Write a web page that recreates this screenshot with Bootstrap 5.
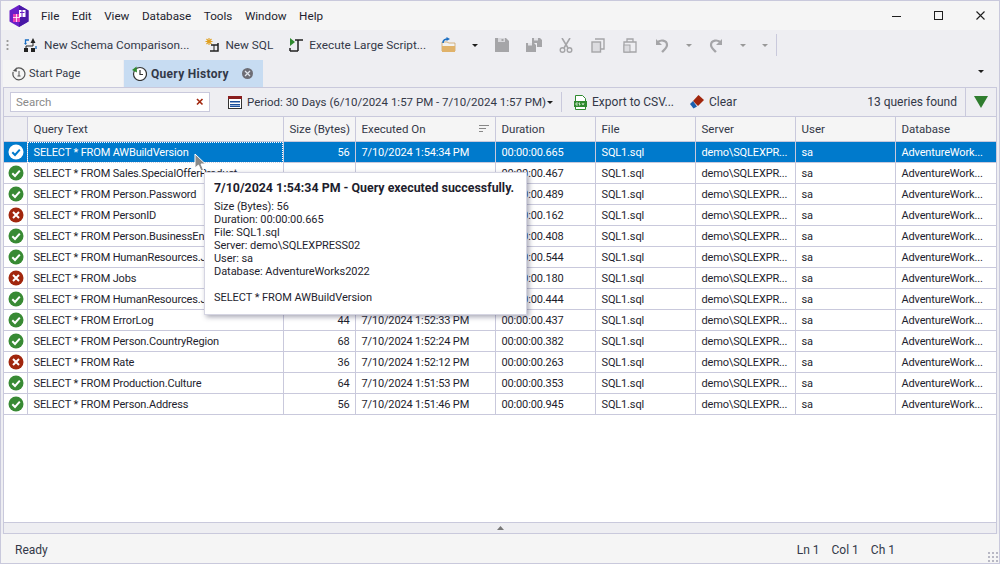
<!DOCTYPE html>
<html lang="en">
<head>
<meta charset="utf-8">
<title>Query History</title>
<link href="https://cdn.jsdelivr.net/npm/bootstrap@5.3.0/dist/css/bootstrap.min.css" rel="stylesheet">
<style>
html,body{height:564px;overflow:hidden}
body{font-family:Roboto,"Liberation Sans",sans-serif;font-size:12px;line-height:16px;color:#1e1e2e;background:#eeeef2;border:1px solid #c9c9dc;position:relative}
.app-title{height:29px;background:#f5f5f5;flex:none}
.app-logo{margin:0 12px 0 8px}
.menu-item{margin-right:12.5px;color:#1e1e2e;font-size:11.7px}
.win-btn{width:42px;display:flex;justify-content:center}
.win-set{margin-right:-3px}
.tool-row{height:30px;flex:none;background:#eeeef2;font-size:11.8px}
.grip{width:3px;height:13px;margin:0 14px 0 5px;background-image:radial-gradient(circle,#999 1px,transparent 1.2px);background-size:3px 4px}
.tool-txt{margin-left:5px;color:#333848}
.tool-ico{width:32px;display:flex;justify-content:center;flex:none}
.folder-slot{margin-left:7px}
.caret-open{margin:0 8px 0 7px}
.caret-undo{margin-left:8px}
.caret-mini{width:0;height:0;border-left:3.5px solid transparent;border-right:3.5px solid transparent;border-top:3.5px solid #1e1e1e;flex:none}
.caret-mute{border-top-color:#999}
.caret-tabs{margin:0 15px 14px auto}
.caret-period{margin-left:1px}
.vsep{width:1px;background:#c9c9dc;align-self:stretch;flex:none}
.tab-row{height:27px;flex:none;padding-left:2px}
.doc-tab{height:27px;display:flex;align-items:center;flex:none}
.tab-start{width:120px;background:#f5f5f5;padding-left:9px;margin-right:1px;font-size:11px;color:#333848}
.tab-start svg{margin-right:3px}
.tab-query{width:139px;background:#c7dcf2;padding-left:8px;font-weight:700;color:#333848;letter-spacing:.3px}
.tab-close{width:11px;height:11px;border-radius:50%;background:#6d6d75;margin-left:13px;display:flex;align-items:center;justify-content:center}
.work-panel{border:1px solid #c9c9dc;margin:0 2px;flex:1 1 0;min-height:0;position:relative}
.filter-row{height:29px;flex:none;border-bottom:1px solid #c9c9dc;padding-left:6px}
.search-box{width:200px;height:20px;background:#fff;border:1px solid #c9c9dc;padding:0 5px;color:#8a8a8a;font-size:11.5px}
.cal-ico{margin-left:18px}
.period-txt{font-size:11.5px}
.csv-ico{margin-left:12px}
.grid-area{flex:1 1 0;min-height:0;background:#fff;overflow:hidden;border-bottom:1px solid #c9c9dc}
.qgrid{table-layout:fixed;border-collapse:collapse;width:992px;color:#1e1e2e;font-size:11px;letter-spacing:-.15px}
.qgrid th,.qgrid td{height:21px;padding:1px 5px 0 6px;border-right:1px solid #c9c9dc;border-bottom:1px solid #c9c9dc;white-space:nowrap;overflow:hidden;font-weight:400;vertical-align:middle;line-height:16px}
.qgrid th{height:24.5px;padding-top:0;background:#f5f5f5;color:#333848;position:relative;font-size:11.5px;letter-spacing:0}
.qgrid th:first-child{background:#eeeef2}
.qgrid td:first-child{padding:0 0 0 1px;text-align:center;background:#fff}
.qgrid td.num{text-align:right;padding-right:5px}
.qgrid td svg{display:block;margin:0 auto}
.row-on td{background:#007acc!important;color:#fff}
.row-on td.cell-focus{outline:1px dotted #fff;outline-offset:-1px}
.sort-ico{position:absolute;right:6px;top:8px}
.strip-low{height:10px;flex:none;display:flex;align-items:center;justify-content:center}
.status-row{height:29px;flex:none;background:#f5f5f5;padding:3px 14px 0;color:#333848;position:relative}
.status-gap{margin-left:12px}
.status-end{margin-right:90px}
.corner-grip{position:absolute;right:1px;bottom:1px;width:11px;height:11px;background-image:radial-gradient(circle,#b8b8c4 1px,transparent 1.1px);background-size:4px 4px}
.hover-tip{position:absolute;left:203px;top:171px;width:323px;height:143px;background:#fff;border:1px solid #d5d5e2;box-shadow:2px 2px 5px rgba(60,60,90,.45);padding:7px 9px;color:#1e1e2e;line-height:13px;z-index:5;font-size:11px;letter-spacing:-.05px}
.hover-tip b{display:block;margin-bottom:4px;line-height:16px;white-space:nowrap;font-size:12.4px;letter-spacing:0}
.hover-cursor{position:absolute;left:193px;top:152px;z-index:6}
</style>
</head>
<body class="d-flex flex-column">
<svg width="0" height="0" class="position-absolute">
<symbol id="ok" viewBox="0 0 16 16"><circle cx="8" cy="8" r="7.5" fill="#388a34"/><path d="M4.300 8.300 7 11l4.800-5.400" fill="none" stroke="#fff" stroke-width="2"/></symbol>
<symbol id="okw" viewBox="0 0 16 16"><circle cx="8" cy="8" r="7.5" fill="#fff"/><path d="M4.300 8.300 7 11l4.800-5.400" fill="none" stroke="#007acc" stroke-width="2"/></symbol>
<symbol id="bad" viewBox="0 0 16 16"><circle cx="8" cy="8" r="7.5" fill="#a1260d"/><path d="m5 5 6 6m0-6-6 6" fill="none" stroke="#fff" stroke-width="2"/></symbol>
</svg>

<div class="app-title d-flex align-items-center">
  <svg class="app-logo" width="20" height="22" viewBox="0 0 20 22"><path d="M10 0 19.500 5.500V16.500L10 22 .5 16.500V5.500Z" fill="#6a1fc8"/><path d="M10 0 19.500 5.500V16.500L10 22Z" fill="#4a1aa6"/><rect x="4" y="9" width="7" height="8" fill="#e83fb8"/><rect x="10" y="5" width="6.500" height="7" fill="#fff"/><path d="M11 7.500h4.500M13 5v7" stroke="#6a1fc8"/><path d="M4 12.500h7M7.500 9v8" stroke="#fff" stroke-width=".8"/></svg>
  <span class="menu-item">File</span><span class="menu-item">Edit</span><span class="menu-item">View</span><span class="menu-item">Database</span><span class="menu-item">Tools</span><span class="menu-item">Window</span><span class="menu-item">Help</span>
  <div class="ms-auto d-flex win-set">
    <span class="win-btn"><svg width="10" height="10"><path d="M0 5.500h9" stroke="#1e1e1e"/></svg></span>
    <span class="win-btn"><svg width="10" height="10"><rect x=".5" y=".5" width="8" height="8" fill="none" stroke="#1e1e1e" stroke-width="1"/></svg></span>
    <span class="win-btn"><svg width="10" height="10"><path d="m.5.500 8 8m0-8-8 8" stroke="#1e1e1e" stroke-width="1.100" fill="none"/></svg></span>
  </div>
</div>

<div class="tool-row d-flex align-items-center">
  <span class="grip"></span>
  <svg width="16" height="16" viewBox="0 0 16 16"><path d="M10 1 7.500 6h5zM1 11h4v4H1zM8 11h4v4H8z" fill="#222"/><path d="M6 3H2.500v3M13 9v3" fill="none" stroke="#1b6ec2" stroke-width="1.300"/><path d="M1 6l1.500 2L4 6z" fill="#1b6ec2"/><path d="M10 6v3H3v2" fill="none" stroke="#222"/></svg>
  <span class="tool-txt">New Schema Comparison...</span>
  <svg class="ms-3" width="15" height="16" viewBox="0 0 15 16"><path d="M4 1v7M.5 4.500h7M1.500 2l5 5m0-5-5 5" stroke="#e0a020" stroke-width="1.100"/><path d="M6 8h7M13 6v8H6.500M5 14h3" fill="none" stroke="#222" stroke-width="1.500"/><path d="M9 8v6" stroke="#222"/></svg>
  <span class="tool-txt">New SQL</span>
  <svg class="ms-3" width="15" height="16" viewBox="0 0 15 16"><path d="M1 1v8l5-4z" fill="#2f8a2f"/><path d="M6 3h8M9 3v11M1 14h8M1 11v3" fill="none" stroke="#222" stroke-width="1.500"/></svg>
  <span class="tool-txt">Execute Large Script...</span>
  <span class="tool-ico folder-slot"><svg width="16" height="16" viewBox="0 0 16 16"><path d="M1 5h5l2 1h6v8H1z" fill="#f2f2f2" stroke="#c59a55" stroke-width=".7"/><path d="M1 15V9h13v6z" fill="#e0b26a"/><path d="M2 6c0-3 2-4 5-4" fill="none" stroke="#1b6ec2" stroke-width="1.600"/><path d="M5.500 0 9 2 5.500 4z" fill="#1b6ec2"/></svg></span>
  <span class="caret-mini caret-open"></span>
  <span class="tool-ico"><svg width="14" height="14" viewBox="0 0 14 14"><path d="M0 0h11l3 3v11H0z" fill="#a5a5a8"/><rect x="3" y="0" width="7" height="4" fill="#d8d8dc"/><rect x="6.500" y="1" width="2" height="2" fill="#a5a5a8"/></svg></span>
  <span class="tool-ico"><svg width="16" height="14" viewBox="0 0 16 14"><path d="M0 5h8l2 2v7H0z" fill="#a5a5a8"/><path d="M6 0h8l2 2v7h-5V5H6z" fill="#a5a5a8"/><rect x="2" y="5" width="4" height="2.500" fill="#e4e4e8"/><rect x="8" y="0" width="4" height="2.500" fill="#e4e4e8"/></svg></span>
  <span class="tool-ico"><svg width="14" height="15" viewBox="0 0 14 15"><path d="m3 0 6 10m2-10L5 10" stroke="#a5a5a8" stroke-width="1.600"/><circle cx="3.500" cy="12" r="2.300" fill="none" stroke="#a5a5a8" stroke-width="1.400"/><circle cx="10.500" cy="12" r="2.300" fill="none" stroke="#a5a5a8" stroke-width="1.400"/></svg></span>
  <span class="tool-ico"><svg width="14" height="15" viewBox="0 0 14 15"><path d="M4 1h9v10h-3" fill="none" stroke="#a5a5a8" stroke-width="1.400"/><rect x="1" y="4" width="8.500" height="10" fill="#dcdce0" stroke="#a5a5a8" stroke-width="1.400"/></svg></span>
  <span class="tool-ico"><svg width="14" height="15" viewBox="0 0 14 15"><path d="M1 4h12v10H1z" fill="none" stroke="#a5a5a8" stroke-width="1.300"/><path d="M4 4V1h6v3" fill="none" stroke="#a5a5a8" stroke-width="1.300"/><rect x="1" y="7" width="6" height="7" fill="#dcdce0" stroke="#a5a5a8"/></svg></span>
  <span class="tool-ico"><svg width="14" height="15" viewBox="0 0 14 15"><path d="M1 1v6h6" fill="#a5a5a8"/><path d="M2 5c3-4 10-3 10 2 0 3-3 5-5 7" fill="none" stroke="#a5a5a8" stroke-width="2.200"/></svg></span>
  <span class="caret-mini caret-mute caret-undo"></span>
  <span class="tool-ico ms-2"><svg width="14" height="15" viewBox="0 0 14 15"><path d="M13 1v6H7" fill="#a5a5a8"/><path d="M12 5C9 1 2 2 2 7c0 3 3 5 5 7" fill="none" stroke="#a5a5a8" stroke-width="2.200"/></svg></span>
  <span class="caret-mini caret-mute caret-undo"></span>
  <span class="caret-mini caret-mute ms-3"></span>
  <span class="vsep ms-2 my-1"></span>
</div>

<div class="tab-row d-flex align-items-end">
  <div class="doc-tab tab-start">
    <svg width="14" height="14" viewBox="0 0 14 14"><path d="M4 1.600A6 6 0 1 1 1.200 5" fill="none" stroke="#555" stroke-width="1.200"/><path d="M7 4v5M5.500 9H8.500" stroke="#555"/><path d="M4.500 .5 .8 4l4 .8z" fill="#555"/></svg>
    <span>Start Page</span>
  </div>
  <div class="doc-tab tab-query">
    <svg width="15" height="15" viewBox="0 0 15 15" class="me-1"><circle cx="8" cy="8" r="6.500" fill="#fff" stroke="#333" stroke-width="1.200"/><path d="M8 4v4.500h3" fill="none" stroke="#333" stroke-width="1.200"/><path d="M4.500 .5 0 4l5 2.500z" fill="#2f8a2f"/></svg>
    <span>Query History</span>
    <span class="tab-close"><svg width="7" height="7"><path d="m1 1 5 5m0-5-5 5" stroke="#dfe3ea" stroke-width="1.300"/></svg></span>
  </div>
  <span class="caret-mini caret-tabs"></span>
</div>

<div class="work-panel d-flex flex-column">
  <div class="filter-row d-flex align-items-center">
    <div class="search-box d-flex align-items-center justify-content-between"><span>Search</span><svg width="8" height="8"><path d="m1 1 5.500 5.500m0-5.500-5.500 5.500" stroke="#a1260d" stroke-width="1.600"/></svg></div>
    <svg class="cal-ico" width="14" height="14" viewBox="0 0 14 14"><rect x=".5" y="1.500" width="13" height="12" fill="#fff" stroke="#333"/><rect x="0" y="1" width="14" height="3" fill="#8a1f1f"/><path d="M2 6h10v1.600H2zM2 9h10v1.600H2z" fill="#1b4f9c"/><path d="M2 11.500h10" stroke="#1b4f9c" stroke-width="1"/></svg>
    <span class="tool-txt period-txt">Period: 30 Days (6/10/2024 1:57 PM - 7/10/2024 1:57 PM)</span>
    <span class="caret-mini caret-period"></span>
    <span class="vsep my-1 ms-2"></span>
    <svg class="csv-ico" width="13" height="15" viewBox="0 0 13 15"><path d="M1.500.5h7l3 3v11h-10z" fill="#fff" stroke="#2f8a2f"/><rect x="0" y="6" width="13" height="6" fill="#2f8a2f"/><path d="M2 8h2M2 8v2h2M6 8H5v1h1v1H5M8 8l1 2 1-2" stroke="#fff" stroke-width=".7" fill="none"/></svg>
    <span class="tool-txt">Export to CSV...</span>
    <svg class="ms-3" width="14" height="14" viewBox="0 0 14 14"><path d="M8.500 0 14 5 8 11 3 6z" fill="#a1260d"/><path d="M3 6 0 9l3.500 4.500L7 11.500z" fill="#1b5fae"/></svg>
    <span class="tool-txt">Clear</span>
    <span class="ms-auto tool-txt">13 queries found</span>
    <span class="vsep ms-2"></span>
    <svg class="mx-2" width="14" height="12" viewBox="0 0 14 12"><path d="M0 0h14L7 12z" fill="#2f7d2f"/></svg>
  </div>
  <div class="grid-area">
    <table class="qgrid">
      <colgroup><col style="width:23px"><col style="width:256px"><col style="width:72px"><col style="width:140px"><col style="width:100px"><col style="width:100px"><col style="width:100px"><col style="width:100px"><col style="width:101px"></colgroup>
      <thead><tr><th></th><th>Query Text</th><th>Size (Bytes)</th><th>Executed On<svg class="sort-ico" width="10" height="8"><path d="M0 .5h10M0 3.500h7M0 6.500h4" stroke="#888"/></svg></th><th>Duration</th><th>File</th><th>Server</th><th>User</th><th>Database</th></tr></thead>
      <tbody>
      <tr class="row-on"><td><svg width="16" height="16"><use href="#okw"/></svg></td><td class="cell-focus">SELECT * FROM AWBuildVersion</td><td class="num">56</td><td>7/10/2024 1:54:34 PM</td><td>00:00:00.665</td><td>SQL1.sql</td><td>demo\SQLEXPR...</td><td>sa</td><td>AdventureWork...</td></tr>
      <tr><td><svg width="16" height="16"><use href="#ok"/></svg></td><td>SELECT * FROM Sales.SpecialOfferProduct</td><td class="num"></td><td></td><td>00:00:00.467</td><td>SQL1.sql</td><td>demo\SQLEXPR...</td><td>sa</td><td>AdventureWork...</td></tr>
      <tr><td><svg width="16" height="16"><use href="#ok"/></svg></td><td>SELECT * FROM Person.Password</td><td class="num"></td><td></td><td>00:00:00.489</td><td>SQL1.sql</td><td>demo\SQLEXPR...</td><td>sa</td><td>AdventureWork...</td></tr>
      <tr><td><svg width="16" height="16"><use href="#bad"/></svg></td><td>SELECT * FROM PersonID</td><td class="num"></td><td></td><td>00:00:00.162</td><td>SQL1.sql</td><td>demo\SQLEXPR...</td><td>sa</td><td>AdventureWork...</td></tr>
      <tr><td><svg width="16" height="16"><use href="#ok"/></svg></td><td>SELECT * FROM Person.BusinessEn</td><td class="num"></td><td></td><td>00:00:00.408</td><td>SQL1.sql</td><td>demo\SQLEXPR...</td><td>sa</td><td>AdventureWork...</td></tr>
      <tr><td><svg width="16" height="16"><use href="#ok"/></svg></td><td>SELECT * FROM HumanResources.J</td><td class="num"></td><td></td><td>00:00:00.544</td><td>SQL1.sql</td><td>demo\SQLEXPR...</td><td>sa</td><td>AdventureWork...</td></tr>
      <tr><td><svg width="16" height="16"><use href="#bad"/></svg></td><td>SELECT * FROM Jobs</td><td class="num"></td><td></td><td>00:00:00.180</td><td>SQL1.sql</td><td>demo\SQLEXPR...</td><td>sa</td><td>AdventureWork...</td></tr>
      <tr><td><svg width="16" height="16"><use href="#ok"/></svg></td><td>SELECT * FROM HumanResources.J</td><td class="num"></td><td></td><td>00:00:00.444</td><td>SQL1.sql</td><td>demo\SQLEXPR...</td><td>sa</td><td>AdventureWork...</td></tr>
      <tr><td><svg width="16" height="16"><use href="#ok"/></svg></td><td>SELECT * FROM ErrorLog</td><td class="num">44</td><td>7/10/2024 1:52:33 PM</td><td>00:00:00.437</td><td>SQL1.sql</td><td>demo\SQLEXPR...</td><td>sa</td><td>AdventureWork...</td></tr>
      <tr><td><svg width="16" height="16"><use href="#ok"/></svg></td><td>SELECT * FROM Person.CountryRegion</td><td class="num">68</td><td>7/10/2024 1:52:24 PM</td><td>00:00:00.382</td><td>SQL1.sql</td><td>demo\SQLEXPR...</td><td>sa</td><td>AdventureWork...</td></tr>
      <tr><td><svg width="16" height="16"><use href="#bad"/></svg></td><td>SELECT * FROM Rate</td><td class="num">36</td><td>7/10/2024 1:52:12 PM</td><td>00:00:00.263</td><td>SQL1.sql</td><td>demo\SQLEXPR...</td><td>sa</td><td>AdventureWork...</td></tr>
      <tr><td><svg width="16" height="16"><use href="#ok"/></svg></td><td>SELECT * FROM Production.Culture</td><td class="num">64</td><td>7/10/2024 1:51:53 PM</td><td>00:00:00.353</td><td>SQL1.sql</td><td>demo\SQLEXPR...</td><td>sa</td><td>AdventureWork...</td></tr>
      <tr><td><svg width="16" height="16"><use href="#ok"/></svg></td><td>SELECT * FROM Person.Address</td><td class="num">56</td><td>7/10/2024 1:51:46 PM</td><td>00:00:00.945</td><td>SQL1.sql</td><td>demo\SQLEXPR...</td><td>sa</td><td>AdventureWork...</td></tr>
      </tbody>
    </table>
  </div>
  <div class="strip-low"><svg width="7" height="4"><path d="M0 4 3.500 0 7 4z" fill="#777"/></svg></div>
</div>

<div class="status-row d-flex align-items-center">
  <span>Ready</span>
  <span class="ms-auto">Ln 1</span><span class="status-gap">Col 1</span><span class="status-gap status-end">Ch 1</span>
  <span class="corner-grip"></span>
</div>

<div class="hover-tip">
  <b>7/10/2024 1:54:34 PM - Query executed successfully.</b>
  Size (Bytes): 56<br>Duration: 00:00:00.665<br>File: SQL1.sql<br>Server: demo\SQLEXPRESS02<br>User: sa<br>Database: AdventureWorks2022<br><br>SELECT * FROM AWBuildVersion
</div>
<svg class="hover-cursor" width="13" height="20" viewBox="0 0 13 20"><path d="M1 1v14l3.500-3 2.500 6 2.500-1-2.500-6h4.500z" fill="#8a8a8a" stroke="#fff" stroke-width="1"/></svg>

<script src="https://cdn.jsdelivr.net/npm/bootstrap@5.3.0/dist/js/bootstrap.bundle.min.js"></script>
</body>
</html>
